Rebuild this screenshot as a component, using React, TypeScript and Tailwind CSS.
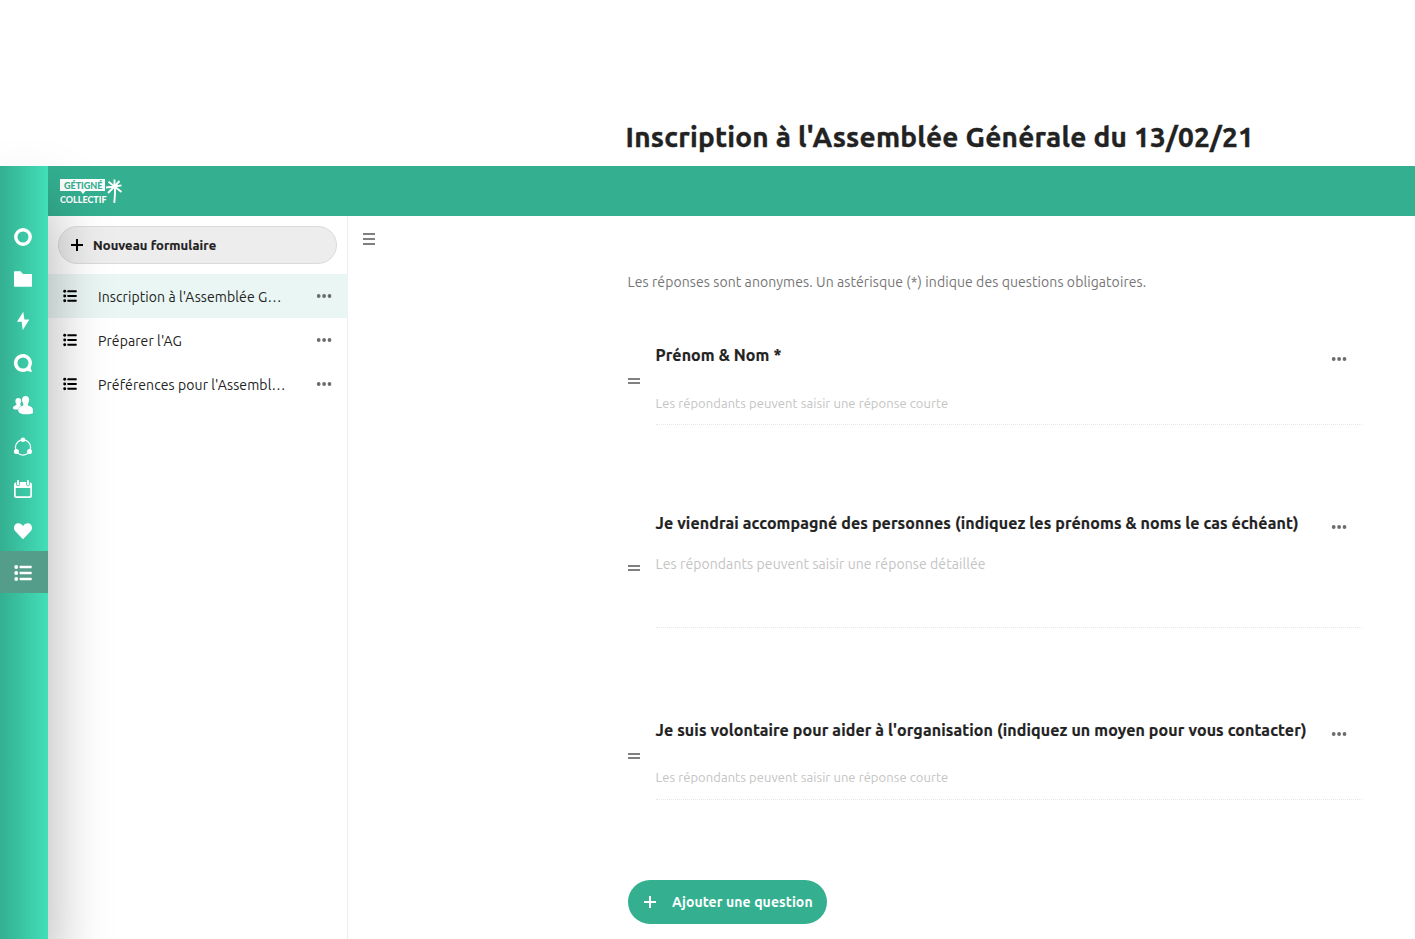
import React from "react";

const Svg = ({ children, className = "h-5 w-5" }: { children: React.ReactNode; className?: string }) => (
  <svg viewBox="0 0 20 20" fill="currentColor" className={className}>
    {children}
  </svg>
);

const ListIcon = ({ className }: { className?: string }) => (
  <svg viewBox="0 0 18 18" fill="currentColor" className={className}>
    <circle cx="2.2" cy="3" r="1.9" />
    <circle cx="2.2" cy="9" r="1.9" />
    <circle cx="2.2" cy="15" r="1.9" />
    <rect x="5.6" y="1.7" width="12" height="2.6" rx="0.5" />
    <rect x="5.6" y="7.7" width="12" height="2.6" rx="0.5" />
    <rect x="5.6" y="13.7" width="12" height="2.6" rx="0.5" />
  </svg>
);

const Dots = () => (
  <svg viewBox="0 0 16 6" className="h-[6px] w-4 fill-[#6c6c6c]">
    <circle cx="2.7" cy="3" r="1.9" />
    <circle cx="8.1" cy="3" r="1.9" />
    <circle cx="13.5" cy="3" r="1.9" />
  </svg>
);

const Plus = () => (
  <svg viewBox="0 0 12 12" className="h-3 w-3" fill="currentColor">
    <path d="M5 0h2v5h5v2H7v5H5V7H0V5h5z" />
  </svg>
);

const railIcons = [
  <Svg key="dashboard">
    <circle cx="10" cy="10" r="7.2" fill="none" stroke="currentColor" strokeWidth="3.4" />
  </Svg>,
  <Svg key="files">
    <path d="M1 2.9Q1 2.3 1.6 2.3H7.6L10 5H18.4Q19 5 19 5.6V17.1Q19 17.7 18.4 17.7H1.6Q1 17.7 1 17.1Z" />
  </Svg>,
  <Svg key="activity">
    <path d="M10.3 0.8 4 10.8h4.7L9.7 19.2 16.3 8.4h-4.9Z" />
  </Svg>,
  <Svg key="talk">
    <path
      fillRule="evenodd"
      d="M10 1a9 9 0 1 0 4.6 16.7c1 .7 2.7 1.1 4 1 .5-.1.5-.5.2-.9-.8-1.1-1-2.4-1-3.4A9 9 0 0 0 10 1Zm0 3.5a5.5 5.5 0 1 1 0 11 5.5 5.5 0 0 1 0-11Z"
    />
  </Svg>,
  <Svg key="contacts">
    <path d="M5.3 2.9c1.800 0 2.900 1.300 2.900 3 0 1.400-.7 2.300-1 3 0 .9.500 1.300 1.200 1.600-1.600.8-2.700 1.800-3.200 3.900H1.600C.5 14.400 0 13.800 0 13c0-1.800 1.700-2.500 3.400-3.100V8.900c-.5-.8-1-1.700-1-3 0-1.700 1.100-3 2.900-3Z" />
    <path d="M12.600.9c2.200 0 3.600 1.600 3.600 3.800 0 1.900-.8 3-1.300 4v1.700c2.300.8 5.100 1.800 5.100 4.500v3c-1 .9-3.500 1.400-7.400 1.400S5 18 5.200 14.900c.1-2.500 2.600-3.700 5.100-4.500V8.700c-.5-1-1.300-2.100-1.300-4C9 2.500 10.400.9 12.600.9Z" />
  </Svg>,
  <Svg key="circles">
    <circle cx="10" cy="10.5" r="7.6" fill="none" stroke="currentColor" strokeWidth="1.3" />
    <circle cx="10" cy="2.8" r="2.3" />
    <circle cx="3.4" cy="14.4" r="2.5" />
    <circle cx="16.6" cy="14.4" r="2.5" />
  </Svg>,
  <Svg key="calendar">
    <rect x="4" y="0.9" width="2" height="5.5" rx="1" />
    <rect x="14" y="0.9" width="2" height="5.5" rx="1" />
    <path
      fillRule="evenodd"
      d="M3.2 3.2V5.5a1.8 1.8 0 0 0 3.6 0V3h6.4V5.5a1.8 1.8 0 0 0 3.6 0V3.200Q19 3.500 19 5.600v10.800q0 2.500-2.500 2.500h-13Q1 18.900 1 16.400V5.600Q1 3.500 3.200 3.200ZM2.700 9v7q0 1.200 1.200 1.200h12.200q1.200 0 1.200-1.200V9Z"
    />
  </Svg>,
  <Svg key="health">
    <path d="M10 18.200 2.600 10.600C-1.500 5.900 3 .2 8 3.100c1 .6 1.600 1.400 2 2.100.4-.7 1-1.500 2-2.100 5-2.900 9.500 2.800 5.400 7.500Z" />
  </Svg>,
  <ListIcon key="forms" className="h-[18px] w-[18px]" />,
];

const Logo = () => (
  <svg viewBox="0 0 64 28" className="h-7 w-16">
    <path d="M0 2h45v12H25.500l-2.500 3-2.500-3H0z" fill="#fff" />
    <text x="4" y="11.800" textLength="38.500" lengthAdjust="spacingAndGlyphs" className="fill-[#34af91] font-['Lato'] text-[10px] font-black">
      GÉTIGNÉ
    </text>
    <text x="0" y="25.800" textLength="46.500" lengthAdjust="spacingAndGlyphs" className="fill-white font-['Lato'] text-[10px] font-black">
      COLLECTIF
    </text>
    <g stroke="#fff" strokeWidth="1.900" fill="none">
      <path d="M54.500 9.500 54.500 2.500M54.500 9.500 59.500 4M54.500 9.500 61.500 8.400M54.500 9.500 61.500 15M54.500 9.500 48.500 4.800M54.500 9.500 46 10.500M54.500 9.500 48 16M55 9.500Q55.300 17 54.300 25.800" />
    </g>
  </svg>
);

const forms = [
  { label: "Inscription à l'Assemblée G…", active: true },
  { label: "Préparer l'AG", active: false },
  { label: "Préférences pour l'Assembl…", active: false },
];

const questions = [
  {
    title: "Prénom & Nom *",
    hint: "Les répondants peuvent saisir une réponse courte",
    hintCls: "mt-[20px] text-[13px] tracking-[0.065px]",
    box: "mt-[43px] h-[90px]",
    handle: "mt-[43px]",
  },
  {
    title: "Je viendrai accompagné des personnes (indiquez les prénoms & noms le cas échéant)",
    hint: "Les répondants peuvent saisir une réponse détaillée",
    hintCls: "mt-[13px] text-[14px] tracking-[0.09px]",
    box: "mt-[78px] h-[125px]",
    handle: "mt-[62px]",
  },
  {
    title: "Je suis volontaire pour aider à l'organisation (indiquez un moyen pour vous contacter)",
    hint: "Les répondants peuvent saisir une réponse courte",
    hintCls: "mt-[19px] text-[13px] tracking-[0.065px]",
    box: "mt-[82px] h-[90px]",
    handle: "mt-[43px]",
  },
];

export default function App() {
  return (
    <div className="flex h-[939px] w-[1415px] flex-col overflow-hidden bg-white font-['Ubuntu','Noto_Sans',sans-serif] text-[#222]">
      <div className="h-[166px] shrink-0 pl-[625.5px] pt-[117px]">
        <h1 className="h-10 whitespace-nowrap text-[28px] font-bold leading-10 tracking-[0.23px] [-webkit-text-stroke:0.4px_#222]">
          Inscription à l'Assemblée Générale du 13/02/21
        </h1>
      </div>
      <div className="flex min-h-0 grow">
        <nav className="relative z-10 flex w-12 shrink-0 flex-col bg-linear-to-r from-[#34af91] to-[#42dfb8] pt-[50px] text-white shadow-[0_35px_60px_rgba(0,0,0,0.35)]">
          {railIcons.map((icon, i) => (
            <a key={i} className={`flex h-[42px] items-center justify-center pr-[2px] ${i === 8 ? "-mt-px bg-[#549d8a] pt-[2px]" : ""}`}>
              {icon}
            </a>
          ))}
        </nav>
        <div className="flex grow flex-col">
          <header className="relative h-[50px] shrink-0 bg-[#34b091] pl-3 pt-[11px]">
            <Logo />
          </header>
          <div className="flex min-h-0 grow">
            <aside className="w-[300px] shrink-0 border-r border-[#ededed] pt-[10px]">
              <button className="ml-[10px] flex h-[38px] w-[279px] items-center rounded-full border border-[#dbdbdb] bg-[#ededed] pl-3">
                <span className="text-black">
                  <Plus />
                </span>
                <span className="ml-[10px] whitespace-nowrap pt-px text-[13px] font-bold tracking-[0.08px] [-webkit-text-stroke:0.2px_#222]">
                  Nouveau formulaire
                </span>
              </button>
              <ul className="mt-[10px]">
                {forms.map((f) => (
                  <li key={f.label} className={`flex h-11 w-[300px] items-center pl-[15px] pr-4 ${f.active ? "bg-[#eaf6f4]" : ""}`}>
                    <ListIcon className="h-[14px] w-[14px] text-black" />
                    <span className="ml-[21px] grow whitespace-nowrap pt-[2px] text-[14px] tracking-[0.09px]">{f.label}</span>
                    <Dots />
                  </li>
                ))}
              </ul>
            </aside>
            <main className="grow">
              <div className="flex h-[46px] items-center pl-[15px]">
                <div className="flex w-3 flex-col gap-[3px]">
                  <i className="h-[2px] bg-[#808080]" />
                  <i className="h-[2px] bg-[#808080]" />
                  <i className="h-[2px] bg-[#808080]" />
                </div>
              </div>
              <div className="ml-[280px] w-[734px]">
                <p className="-ml-[0.5px] mt-[10px] h-5 whitespace-nowrap text-[14px] leading-5 tracking-[0.085px] text-[#767676]">
                  Les réponses sont anonymes. Un astérisque (*) indique des questions obligatoires.
                </p>
                {questions.map((q, i) => (
                  <section key={i} className={`flex ${q.box}`}>
                    <div className={`${q.handle} flex w-7 flex-col gap-[2px]`}>
                      <i className="h-[2px] w-3 bg-[#808080]" />
                      <i className="h-[2px] w-3 bg-[#808080]" />
                    </div>
                    <div className="w-[706px] border-b border-dotted border-[#e6e6e6]">
                      <div className="-ml-[0.5px] flex h-10 items-start justify-between pr-[15px] pt-[8px]">
                        <h2 className="h-6 whitespace-nowrap text-[16px] font-bold leading-6 tracking-[0.115px] [-webkit-text-stroke:0.2px_#222]">
                          {q.title}
                        </h2>
                        <span className="pt-[13px]">
                          <Dots />
                        </span>
                      </div>
                      <p className={`-ml-[0.5px] h-4 whitespace-nowrap leading-4 text-[#c4c4c4] ${q.hintCls}`}>{q.hint}</p>
                    </div>
                  </section>
                ))}
                <button className="mt-[80px] flex h-11 w-[199px] items-center rounded-full bg-[#34b091] pl-4 text-white">
                  <Plus />
                  <span className="ml-4 whitespace-nowrap text-[14px] font-bold tracking-[0.09px]">Ajouter une question</span>
                </button>
              </div>
            </main>
          </div>
        </div>
      </div>
    </div>
  );
}
